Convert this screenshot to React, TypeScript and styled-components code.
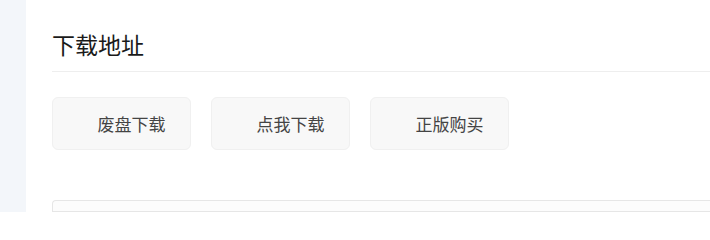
import React from 'react';
import styled, { createGlobalStyle } from 'styled-components';

const GlobalStyle = createGlobalStyle`
  html, body {
    margin: 0;
    padding: 0;
    height: 212px;
    overflow: hidden;
    background: #fff;
    font-family: "Noto Sans CJK SC", "Noto Sans", sans-serif;
  }
`;

const links = ['废盘下载', '点我下载', '正版购买'];

const App = () => (
  <>
    <GlobalStyle />
    <Page>
      <Side />
      <Panel>
        <Title>下载地址</Title>
        <Buttons>
          {links.map((l) => (
            <LinkButton key={l}>
              <IconSlot />
              {l}
            </LinkButton>
          ))}
        </Buttons>
        <NextBox />
      </Panel>
    </Page>
  </>
);

export default App;

const Page = styled.div`
  display: flex;
  height: 212px;
  overflow: hidden;
`;

const Side = styled.div`
  width: 26px;
  flex-shrink: 0;
  background: #f3f6fa;
`;

const Panel = styled.div`
  flex: 1;
  background: #fff;
  padding: 28px 0 0 26px;
  display: flex;
  flex-direction: column;
`;

const Title = styled.h2`
  margin: 0;
  padding-bottom: 11px;
  font-size: 23px;
  font-weight: 400;
  line-height: 32px;
  color: #1a1a1a;
  border-bottom: 1px solid #eeeeee;
`;

const Buttons = styled.div`
  display: flex;
  gap: 20px;
  padding-top: 25px;
`;

const LinkButton = styled.a`
  width: 139px;
  height: 53px;
  box-sizing: border-box;
  display: flex;
  align-items: center;
  justify-content: center;
  background: #f8f8f8;
  border: 1px solid #f0f0f0;
  border-radius: 6px;
  font-size: 17px;
  color: #444;
  cursor: pointer;
`;

const IconSlot = styled.span`
  width: 20px;
  display: inline-block;
`;

const NextBox = styled.div`
  margin-top: 50px;
  height: 40px;
  border: 1px solid #e6e6e6;
  border-right: none;
  border-radius: 4px 0 0 0;
  background: #fcfcfc;
`;
